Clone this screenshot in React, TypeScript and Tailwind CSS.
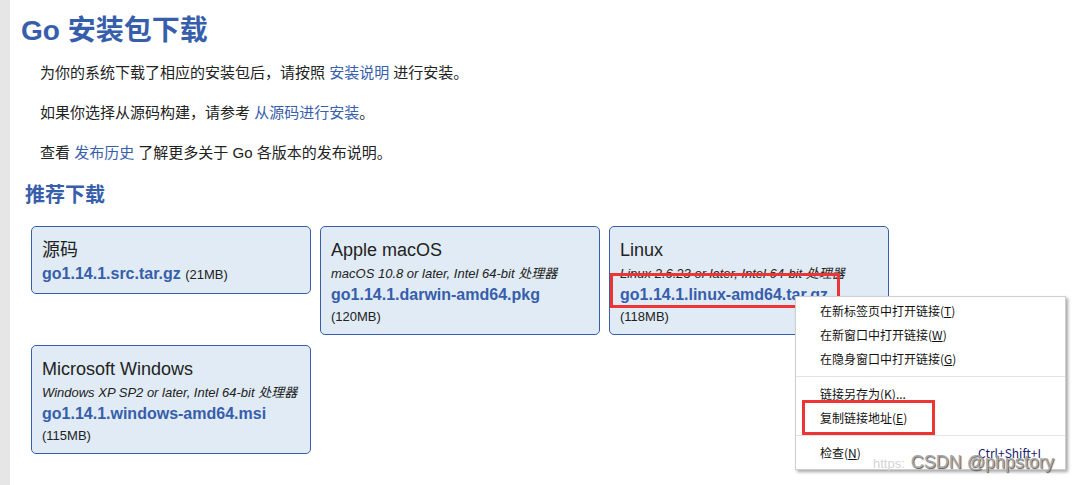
import React from 'react';

const FONT = "font-['Liberation_Sans','Noto_Sans_CJK_SC',sans-serif]";

// download cards shown under 推荐下载
const featured = [
  { title: "源码", file: "go1.14.1.src.tar.gz", size: "21MB" },
  { title: "Apple macOS", desc: "macOS 10.8 or later, Intel 64-bit 处理器", file: "go1.14.1.darwin-amd64.pkg", size: "120MB" },
  { title: "Linux", desc: "Linux 2.6.23 or later, Intel 64-bit 处理器", file: "go1.14.1.linux-amd64.tar.gz", size: "118MB" },
  { title: "Microsoft Windows", desc: "Windows XP SP2 or later, Intel 64-bit 处理器", file: "go1.14.1.windows-amd64.msi", size: "115MB" },
];

const menuGroups = [
  [
    { label: "在新标签页中打开链接", key: "T" },
    { label: "在新窗口中打开链接", key: "W" },
    { label: "在隐身窗口中打开链接", key: "G" },
  ],
  [
    { label: "链接另存为", key: "K", tail: "..." },
    { label: "复制链接地址", key: "E" },
  ],
  [{ label: "检查", key: "N", shortcut: "Ctrl+Shift+I" }],
];

const DownloadCard = ({ card }: { card: typeof featured[number] }) => (
  <div className="w-[280px] rounded-[5px] border border-[#375eab] bg-[#e0ebf5] px-[10px] pt-[10px] pb-[7px] text-[#222]">
    <div className="text-[18px] leading-[26px]">{card.title}</div>
    {card.desc && <div className="text-[13px] italic leading-[21px]">{card.desc}</div>}
    {card.desc ? (
      <>
        <div className="text-[16px] font-bold leading-[22px] text-[#375eab]">{card.file}</div>
        <div className="text-[13px] leading-[21px]">({card.size})</div>
      </>
    ) : (
      <div className="leading-[22px]">
        <span className="text-[16px] font-bold text-[#375eab]">{card.file}</span>{" "}
        <span className="text-[13px]">({card.size})</span>
      </div>
    )}
  </div>
);

const ContextMenu = () => (
  <div className="absolute left-[795px] top-[296px] w-[271px] border border-[#cfcfcf] bg-white pt-[2px] pb-1 text-[12px] text-[#111] shadow-[2px_2px_3px_rgba(0,0,0,0.35)] font-['Noto_Sans_CJK_SC',sans-serif]">
    {menuGroups.map((group, gi) => (
      <div key={gi}>
        {gi > 0 && <div className="my-[5px] h-px bg-[#e3e3e3]" />}
        {group.map((item) => (
          <div key={item.label} className="flex h-6 items-center justify-between px-6">
            <span>
              {item.label}(<u>{item.key}</u>){item.tail}
            </span>
            {item.shortcut && <span className="text-[#1a1a6e]">{item.shortcut}</span>}
          </div>
        ))}
      </div>
    ))}
  </div>
);

export default function App() {
  return (
    <div className={`relative flex h-[485px] overflow-hidden bg-white ${FONT}`}>
      <div className="w-[10px] shrink-0 bg-[#e6e6e6]" />
      <main className="flex-1 pl-[11px] pt-[13px]">
        <h1 className="text-[28px] font-bold leading-[36px] text-[#375eab]">Go 安装包下载</h1>

        <div className="mt-[14px] space-y-5 pl-[19px] text-[15px] leading-[20px] text-[#222]">
          <p>
            为你的系统下载了相应的安装包后，请按照 <span className="text-[#375eab]">安装说明</span> 进行安装。
          </p>
          <p>
            如果你选择从源码构建，请参考 <span className="text-[#375eab]">从源码进行安装</span>。
          </p>
          <p>
            查看 <span className="text-[#375eab]">发布历史</span> 了解更多关于 Go 各版本的发布说明。
          </p>
        </div>

        <h2 className="mt-[18px] pl-[4px] text-[20px] font-bold leading-[28px] text-[#375eab]">推荐下载</h2>

        <div className="mt-[17px] flex flex-wrap items-start gap-x-[9px] gap-y-[10px] pl-[10px]">
          {featured.map((card) => (
            <DownloadCard key={card.file} card={card} />
          ))}
        </div>

        <h2 className="mt-[38px] pl-[4px] text-[20px] font-bold leading-[28px] text-[#375eab]">稳定版本</h2>
      </main>

      {/* annotation around the linux link */}
      <div className="absolute left-[610px] top-[273px] h-[35px] w-[230px] border-[3px] border-[#ee3535]" />

      <ContextMenu />

      {/* annotation around 复制链接地址 */}
      <div className="absolute left-[802px] top-[400px] h-[35px] w-[133px] border-[3px] border-[#ee3535]" />

      <div className="absolute left-[873px] top-[451px] flex items-baseline gap-[6px] leading-[22px]">
        <span className="text-[13px] text-[#d4d4d4]">https:</span>
        <span className="text-[18px] text-[#a8a8a8] [text-shadow:1px_1px_1px_#555]">CSDN @phpstory</span>
      </div>
    </div>
  );
}
